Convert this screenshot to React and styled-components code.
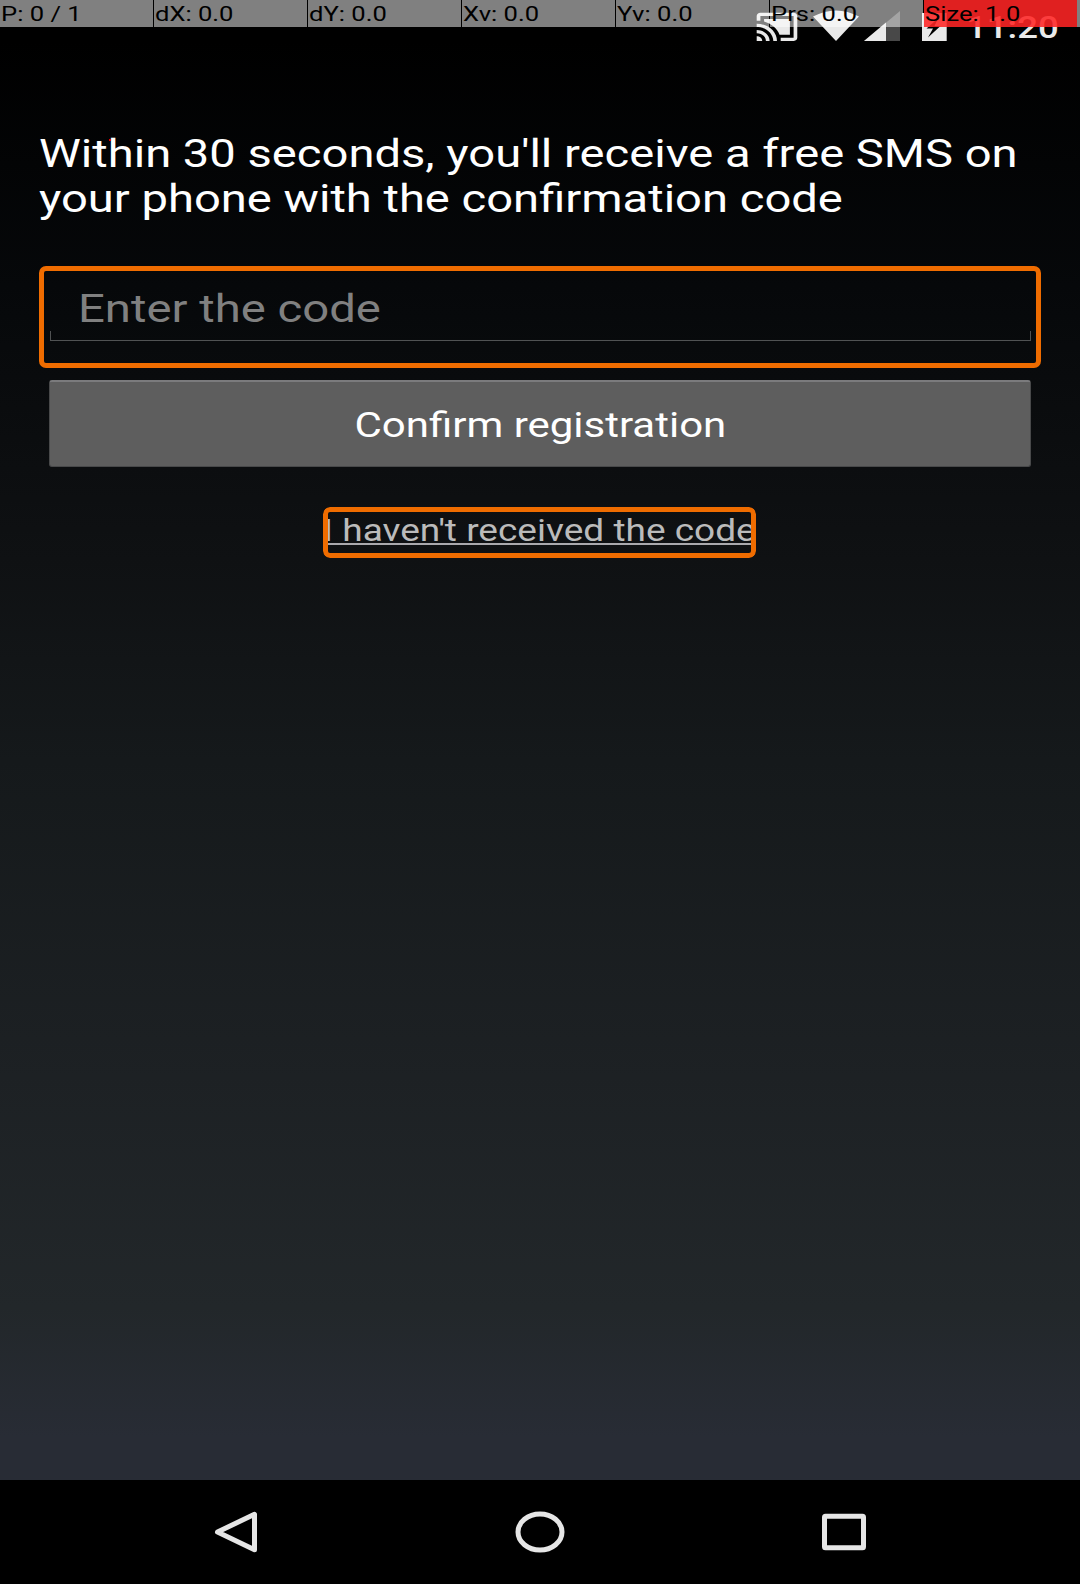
import React from "react";
import styled, { createGlobalStyle } from "styled-components";

const GlobalStyle = createGlobalStyle`
  * { box-sizing: border-box; }
  body { margin: 0; background: #000; font-family: Roboto, "Noto Sans", sans-serif; }
`;

const Screen = styled.div`
  position: relative;
  display: flex;
  flex-direction: column;
  width: 1080px;
  height: 1584px;
  overflow: hidden;
  background: #000;
`;

const Stretch = styled.span`
  display: block;
  width: max-content;
  white-space: nowrap;
  transform: scaleX(${(p) => p.$x || 1.2121});
  transform-origin: ${(p) => p.$origin || "left"} center;
`;

const StatusBar = styled.header`
  height: 41px;
  flex: none;
  display: flex;
  justify-content: flex-end;
  padding-right: 22px;
`;

const StatusIcons = styled.svg`
  display: block;
  width: 200px;
  height: 41px;
`;

const Clock = styled.div`
  width: 102px;
  font-size: 31px;
  font-weight: 500;
  line-height: 38px;
  padding: 9px 0 0 10px;
  color: #e9e9e9;
`;

const PointerBar = styled.div`
  position: absolute;
  inset: 0 0 auto 0;
  height: 27px;
  display: grid;
  grid-template-columns: repeat(7, 154px);
`;

const PointerCell = styled.div`
  height: 26.5px;
  border-right: ${(p) => (p.$last ? "3px solid rgba(255,255,255,.5)" : "0")};
  margin-right: ${(p) => (p.$last ? "-2px" : "1px")};
  padding-left: 1px;
  background: ${(p) => (p.$hot ? "rgba(255,36,36,.88)" : "rgba(255,255,255,.5)")};
  background-clip: padding-box;
  color: #000;
  font-size: 21.1px;
  line-height: 27px;
`;

const TouchDot = styled.div`
  position: absolute;
  left: 109px;
  top: 139px;
  width: 2px;
  height: 2px;
  background: #e00;
`;

const Content = styled.main`
  flex: 1;
  display: flex;
  flex-direction: column;
  align-items: stretch;
  padding: 90px 39px 0;
  background: linear-gradient(#000 0%, #06080a 17%, #0f1113 36%, #15191b 50%, #1d2124 72%, #22272a 88%, #282c35 97%, #282c35 100%);
`;

const Heading = styled.h1`
  margin: 0;
  height: 135px;
  font-size: 39.6px;
  font-weight: 400;
  line-height: 45.3px;
  color: #fff;
`;

const Field = styled.div`
  height: 102px;
  border: 5px solid #ef6c00;
  border-radius: 7px;
  padding: 6px 5px 0 6px;
`;

const FieldInner = styled.div`
  position: relative;
  height: 64px;
  padding-left: 28px;
  font-size: 39.6px;
  line-height: 64px;
  color: #808080;
  &::after {
    content: "";
    position: absolute;
    inset: auto 0 0 0;
    height: 9px;
    border: 1px solid #505253;
    border-top: 0;
  }
`;

const ConfirmButton = styled.button`
  margin: 12px 10px 0;
  height: 87px;
  padding: 1px 0 0;
  display: flex;
  justify-content: center;
  align-items: center;
  border: 1px solid #48494a;
  border-top: 2px solid #7b7b7d;
  border-radius: 3px;
  background: #5e5e5e;
  color: #fff;
  font: 400 34.65px/40px Roboto, sans-serif;
`;

const ResendLink = styled.a`
  position: relative;
  align-self: center;
  margin: 40px 1px 0 0;
  width: 433px;
  height: 51px;
  font-size: 30.6px;
  line-height: 47px;
  color: #bbb;
  overflow: hidden;
  border-radius: 7px;
  &::before {
    content: "";
    position: absolute;
    left: 0;
    right: 0;
    top: 36px;
    height: 2px;
    background: #aaa9ad;
  }
  &::after {
    content: "";
    position: absolute;
    inset: 0;
    border: 5px solid #ef6c00;
    border-radius: 7px;
  }
`;

const NavBar = styled.nav`
  flex: none;
  height: 104px;
  display: flex;
  justify-content: center;
  align-items: center;
  gap: 244px;
  background: #000;
`;

const NavIcon = styled.svg`
  display: block;
  width: 60px;
  height: 44px;
  fill: none;
  stroke: #e6e6e6;
  stroke-width: 5;
  stroke-linejoin: round;
`;

const readings = ["P: 0 / 1", "dX: 0.0", "dY: 0.0", "Xv: 0.0", "Yv: 0.0", "Prs: 0.0", "Size: 1.0"];

export default function App() {
  return (
    <Screen>
      <GlobalStyle />
      <StatusBar>
        <StatusIcons viewBox="756 0 200 41">
          <g fill="#e9e9e9">
            <path
              transform="translate(754.85 8.1) scale(1.845 1.567)"
              d="M1 18v3h3c0-1.66-1.34-3-3-3zm0-4v2c2.76 0 5 2.24 5 5h2c0-3.87-3.13-7-7-7zm18-7H5v1.63c3.96 1.28 7.09 4.41 8.37 8.37H19V7zM1 10v2c4.97 0 9 4.03 9 9h2c0-6.08-4.93-11-11-11zm20-7H3c-1.1 0-2 .9-2 2v3h2V5h18v14h-7v2h7c1.1 0 2-.9 2-2V5c0-1.1-.9-2-2-2z"
            />
            <path d="M813 16.500Q836 4.500 859 16.500L836 41z" />
            <path fill="#484848" d="M900 11V41H864z" />
            <path d="M886 22.500V41H864z" />
            <path
              fillRule="evenodd"
              d="M922 13h24.700v28h-24.700zM938 18.500L926.500 28.500h6.500l-5 9L940.500 26h-6z"
            />
          </g>
        </StatusIcons>
        <Clock>
          <Stretch $x={1.18}>11:20</Stretch>
        </Clock>
      </StatusBar>

      <Content>
        <Heading>
          <Stretch $x={1.191}>Within 30 seconds, you'll receive a free SMS on</Stretch>
          <Stretch $x={1.191}>your phone with the confirmation code</Stretch>
        </Heading>
        <Field>
          <FieldInner>
            <Stretch $x={1.194}>Enter the code</Stretch>
          </FieldInner>
        </Field>
        <ConfirmButton>
          <Stretch $origin="center">Confirm registration</Stretch>
        </ConfirmButton>
        <ResendLink>
          <Stretch $x={1.21}>I haven't received the code</Stretch>
        </ResendLink>
      </Content>

      <NavBar>
        <NavIcon viewBox="206 1510 60 44">
          <path d="M217.500 1532L254.500 1514.300V1549.700z" />
        </NavIcon>
        <NavIcon viewBox="510 1510 60 44">
          <ellipse cx="540" cy="1532" rx="22" ry="18" />
        </NavIcon>
        <NavIcon viewBox="814 1510 60 44">
          <rect x="824.500" y="1516.200" width="39" height="31.600" rx="1" />
        </NavIcon>
      </NavBar>

      <TouchDot />
      <PointerBar>
        {readings.map((r, i) => (
          <PointerCell key={r} $hot={i === 6} $last={i === 6}>
            <Stretch>{r}</Stretch>
          </PointerCell>
        ))}
      </PointerBar>
    </Screen>
  );
}
